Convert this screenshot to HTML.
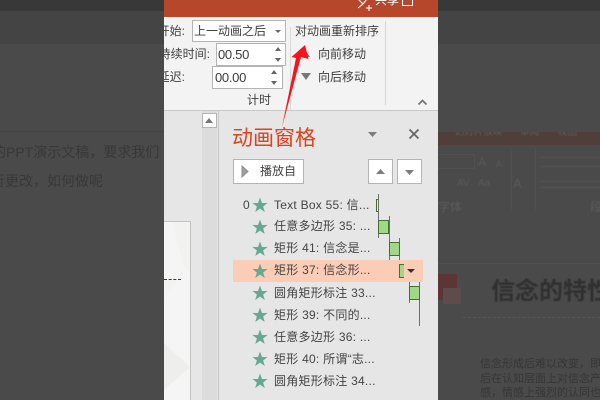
<!DOCTYPE html>
<html><head><meta charset="utf-8">
<style>
html,body{margin:0;padding:0;overflow:hidden}
body{width:600px;height:400px;overflow:hidden;position:relative;background:#4a4a4a;font-family:"Liberation Sans","Noto Sans CJK SC",sans-serif;}
.a{position:absolute}
.c{position:absolute;overflow:hidden}
.t{position:absolute;white-space:nowrap;line-height:18px;font-size:12px;color:#404040}
.b{position:absolute;box-sizing:border-box;border:1.5px solid #b4b4b4;background:#fff}
.r{position:absolute;left:274px;white-space:nowrap;line-height:18px;font-size:12px;color:#444;letter-spacing:.25px}
.g{position:absolute;box-sizing:border-box;background:#9fd987;border:1px solid #44702c}
.l{position:absolute;width:1px;background:#6f6f6f}
.s{position:absolute;left:252px}
</style></head><body>
<svg width="0" height="0" style="position:absolute"><defs><polygon id="st" points="8,0.5 10,6 15.6,6 11.1,9.5 12.8,15 8,11.6 3.2,15 4.9,9.5 0.4,6 6,6" fill="#66a993"/></defs></svg>

<!-- left dimmed -->
<div class="c" style="left:0;top:0;width:164px;height:400px">
  <div class="a" style="left:0;top:0;width:164px;height:11px;background:#383838"></div>
  <div class="a" style="left:0;top:11px;width:164px;height:33px;background:#444"></div>
  <div class="a" style="left:0;top:131px;width:164px;height:1px;background:#454545"></div>
  <div class="t" style="left:-8px;top:143px;font-size:14px;color:#383838">的PPT演示文稿，要求我们</div>
  <div class="t" style="left:-23px;top:172px;font-size:14px;color:#383838">进行更改，如何做呢</div>
</div>

<!-- right dimmed -->
<div class="c" style="left:438px;top:0;width:162px;height:400px">
  <div class="a" style="left:0;top:0;width:162px;height:11px;background:#383838"></div>
  <div class="a" style="left:0;top:11px;width:162px;height:33px;background:#444"></div>
  <div class="a" style="left:0;top:132px;width:162px;height:13px;background:#4f3e39"></div>
  <div class="c" style="left:0;top:132px;width:162px;height:7px">
    <div class="t" style="left:17px;top:-6px;font-size:9.5px;line-height:14px;color:#5f5f5f;filter:blur(.4px)">幻灯片放映</div>
    <div class="t" style="left:82px;top:-6px;font-size:9.5px;line-height:14px;color:#5f5f5f;filter:blur(.4px)">审阅</div>
    <div class="t" style="left:120px;top:-6px;font-size:9.5px;line-height:14px;color:#5f5f5f;filter:blur(.4px)">视图</div>
  </div>
  <div class="a" style="left:-10px;top:154px;width:45px;height:13px;border:1px solid #505050"></div>
  <div class="t" style="left:40px;top:153px;font-size:12px;color:#5a5a5a;filter:blur(.5px)">A</div>
  <div class="t" style="left:58px;top:155px;font-size:9px;color:#5a5a5a;filter:blur(.5px)">A</div>
  <div class="a" style="left:73px;top:150px;width:1px;height:60px;background:#505050"></div>
  <div class="t" style="left:19px;top:175px;font-size:10px;color:#5a5a5a;filter:blur(.5px)">AV</div>
  <div class="t" style="left:40px;top:175px;font-size:10px;color:#5a5a5a;filter:blur(.5px)">Aa</div>
  <div class="t" style="left:75px;top:175px;font-size:13px;color:#5a5a5a;filter:blur(.5px)">A</div>
  <div class="a" style="left:97px;top:148px;width:1px;height:62px;background:#505050"></div>
  <div class="a" style="left:102px;top:157px;width:60px;height:8px;border-top:1px solid #565656;border-bottom:1px solid #565656;filter:blur(.5px)"></div>
  <div class="a" style="left:102px;top:181px;width:60px;height:5px;border-top:1px solid #565656;border-bottom:1px solid #565656;filter:blur(.5px)"></div>
  <div class="t" style="left:0;top:198px;font-size:12px;color:#5c5c5c;filter:blur(.5px)">字体</div>
  <div class="t" style="left:152px;top:198px;font-size:12px;color:#5c5c5c;filter:blur(.5px)">段</div>
  <div class="a" style="left:0;top:263px;width:162px;height:1px;background:#505050"></div>
  <div class="a" style="left:0;top:274px;width:19px;height:26px;background:#5d3535"></div>
  <div class="a" style="left:5px;top:288px;width:18px;height:16px;background:#5e4b4b"></div>
  <div class="t" style="left:53px;top:275px;font-size:24px;font-weight:bold;line-height:34px;color:#303030;filter:blur(.4px)">信念的特性</div>
  <div class="a" style="left:25px;top:317px;width:137px;border-top:1px dashed #6b4d4d"></div>
  <div class="t" style="left:42px;top:355px;font-size:11px;color:#363636;filter:blur(.3px)">信念形成后难以改变，即使</div>
  <div class="t" style="left:42px;top:370px;font-size:11px;color:#363636;filter:blur(.3px)">后在认知层面上对信念产生</div>
  <div class="t" style="left:42px;top:384px;font-size:11px;color:#363636;filter:blur(.3px)">感，情感上强烈的认同也使</div>
</div>

<!-- center -->
<div class="c" style="left:164px;top:0;width:274px;height:400px;background:#e6e6e6">
  <div class="a" style="left:0;top:0;width:274px;height:17px;background:#b7472a"></div>
  <div class="a" style="left:0;top:17px;width:274px;height:93px;background:#f3f3f3;border-bottom:1px solid #c9c9c9"></div>
  <!-- slide -->
  <div class="a" style="left:0;top:221px;width:26px;height:179px;background:#f5f5f5;border:1px solid #c4c4c4;border-left:0;border-bottom:0"></div>
  <svg class="a" style="left:0;top:222px" width="26" height="178"><polygon points="8,0 26,0 26,50 20,45" fill="#f2f2f1"/><polygon points="0,121 26,145 0,168" fill="#eeeeec"/><polygon points="0,60 26,45 0,75" fill="#f3f3f2"/></svg>
  <div class="a" style="left:0;top:279px;width:17px;border-top:1px dashed #c00000"></div>
  <!-- scrollbar -->
  <div class="a" style="left:38px;top:111px;width:15px;height:289px;background:#dcdcdc"></div>
  <div class="a" style="left:54px;top:111px;width:1px;height:289px;background:#c6c6c6"></div>

  <!-- top bar -->
  <svg class="a" style="left:192px;top:0" width="18" height="11"><path d="M2,-1 L7,4 L2,8 M7,4 L11,-1 M10,8 H16 M13,5 V11" fill="none" stroke="#fff" stroke-width="1.1"/></svg>
  <div class="t" style="left:211px;top:-9px;font-size:12px;color:#fff">共享</div>
  <div class="a" style="left:238px;top:-5px;width:9px;height:9px;border:1px solid #fff"></div>

  <!-- labels clipped at left edge -->
  <div class="t" style="right:253px;top:22px">开始:</div>
  <div class="t" style="right:228px;top:45px">持续时间:</div>
  <div class="t" style="right:253px;top:68px">延迟:</div>
</div>

<div class="b" style="left:192px;top:20px;width:94px;height:22px"></div>
<div class="t" style="left:194px;top:22px">上一动画之后</div>
<svg class="a" style="left:275px;top:29px" width="8" height="6"><polygon points="0,1 6,1 3,4" fill="#666"/></svg>
<div class="b" style="left:216px;top:43px;width:70px;height:23px"></div>
<div class="t" style="left:218px;top:46px;font-size:13px;letter-spacing:-.3px;color:#3a3a3a">00.50</div>
<svg class="a" style="left:275px;top:46px" width="8" height="18"><polygon points="0,5 6,5 3,1" fill="#666"/><polygon points="0,12 6,12 3,16" fill="#666"/></svg>
<div class="b" style="left:212px;top:66px;width:71px;height:23px"></div>
<div class="t" style="left:215px;top:69px;font-size:13px;letter-spacing:-.3px;color:#3a3a3a">00.00</div>
<svg class="a" style="left:271px;top:69px" width="8" height="18"><polygon points="0,5 6,5 3,1" fill="#666"/><polygon points="0,12 6,12 3,16" fill="#666"/></svg>
<div class="t" style="left:247px;top:91px">计时</div>
<div class="a" style="left:290px;top:27px;width:1px;height:83px;background:#dcdcdc"></div>
<div class="a" style="left:385px;top:21px;width:1px;height:84px;background:#d5d5d5"></div>
<div class="t" style="left:295px;top:22px">对动画重新排序</div>
<div class="t" style="left:318px;top:45px">向前移动</div>
<div class="t" style="left:318px;top:68px">向后移动</div>
<svg class="a" style="left:300px;top:49px" width="12" height="9"><polygon points="0,8 10,8 5,1" fill="#777"/></svg>
<svg class="a" style="left:300px;top:72px" width="12" height="9"><polygon points="1,1 11,1 6,8" fill="#777"/></svg>
<svg class="a" style="left:417px;top:98px" width="12" height="8"><path d="M1.5,6.5 L5.5,2.5 L9.5,6.5" fill="none" stroke="#777" stroke-width="1.8"/></svg>

<!-- scroll up button -->
<div class="b" style="left:202px;top:113px;width:15px;height:15px"></div>
<svg class="a" style="left:205px;top:117px" width="10" height="7"><polygon points="0,6 8,6 4,1" fill="#777"/></svg>

<!-- pane -->
<div class="t" style="left:232px;top:126px;font-size:21px;line-height:26px;color:#d9431e">动画窗格</div>
<svg class="a" style="left:367px;top:131px" width="12" height="8"><polygon points="1,1 10,1 5.5,6" fill="#7d7d7d"/></svg>
<svg class="a" style="left:408px;top:128px" width="12" height="12"><path d="M1.5,1.5 L10.5,10.5 M10.5,1.5 L1.5,10.5" stroke="#666" stroke-width="1.8"/></svg>
<div class="b" style="left:233px;top:159px;width:71px;height:25px"></div>
<svg class="a" style="left:241px;top:165px" width="9" height="13"><polygon points="1,1 7,6.5 1,12" fill="#a0a0a0" stroke="#8c8c8c"/></svg>
<div class="t" style="left:260px;top:162px;color:#444">播放自</div>
<div class="b" style="left:368px;top:159px;width:25px;height:25px"></div>
<svg class="a" style="left:375px;top:168px" width="11" height="7"><polygon points="1,6 10,6 5.5,1" fill="#7d7d7d"/></svg>
<div class="b" style="left:397px;top:159px;width:25px;height:25px"></div>
<svg class="a" style="left:404px;top:169px" width="11" height="7"><polygon points="1,1 10,1 5.5,6" fill="#7d7d7d"/></svg>

<!-- highlight -->
<div class="a" style="left:233px;top:260px;width:190px;height:22px;background:#fccdb6"></div>

<div class="t" style="left:243px;top:196px;font-size:12px;color:#444">0</div>
<svg class="s" style="top:197px" width="16" height="16"><use href="#st"/></svg><div class="r" style="top:196px">Text Box 55: 信...</div>
<svg class="s" style="top:219px" width="16" height="16"><use href="#st"/></svg><div class="r" style="top:217px">任意多边形 35: ...</div>
<svg class="s" style="top:241px" width="16" height="16"><use href="#st"/></svg><div class="r" style="top:239px">矩形 41: 信念是...</div>
<svg class="s" style="top:263px" width="16" height="16"><use href="#st"/></svg><div class="r" style="top:261px">矩形 37: 信念形...</div>
<svg class="s" style="top:285px" width="16" height="16"><use href="#st"/></svg><div class="r" style="top:284px">圆角矩形标注 33...</div>
<svg class="s" style="top:307px" width="16" height="16"><use href="#st"/></svg><div class="r" style="top:306px">矩形 39: 不同的...</div>
<svg class="s" style="top:329px" width="16" height="16"><use href="#st"/></svg><div class="r" style="top:328px">任意多边形 36: ...</div>
<svg class="s" style="top:351px" width="16" height="16"><use href="#st"/></svg><div class="r" style="top:350px">矩形 40: 所谓“志...</div>
<svg class="s" style="top:373px" width="16" height="16"><use href="#st"/></svg><div class="r" style="top:372px">圆角矩形标注 34...</div>

<!-- timeline -->
<div class="l" style="left:378px;top:194px;height:44px"></div>
<div class="a" style="left:376px;top:199px;width:2px;height:13px;border-left:1px solid #44702c;border-top:1px solid #44702c;border-bottom:1px solid #44702c;box-sizing:border-box"></div>
<div class="l" style="left:389px;top:216px;height:44px"></div>
<div class="g" style="left:378px;top:220px;width:11px;height:14px"></div>
<div class="l" style="left:399px;top:238px;height:22px"></div>
<div class="g" style="left:389px;top:242px;width:11px;height:14px"></div>
<div class="g" style="left:399px;top:264px;width:5px;height:14px;border-right:0"></div>
<svg class="a" style="left:406px;top:268px" width="10" height="6"><polygon points="1,1 9,1 5,5" fill="#333"/></svg>
<div class="l" style="left:409px;top:282px;height:21px"></div>
<div class="l" style="left:419px;top:282px;height:44px"></div>
<div class="g" style="left:409px;top:286px;width:11px;height:14px"></div>

<!-- red arrow -->
<svg class="a" style="left:0;top:0" width="600" height="400"><polygon points="305,45 308.5,59 301,57 282,127 296,58 291.5,57" fill="#f9141c"/></svg>
</body></html>
